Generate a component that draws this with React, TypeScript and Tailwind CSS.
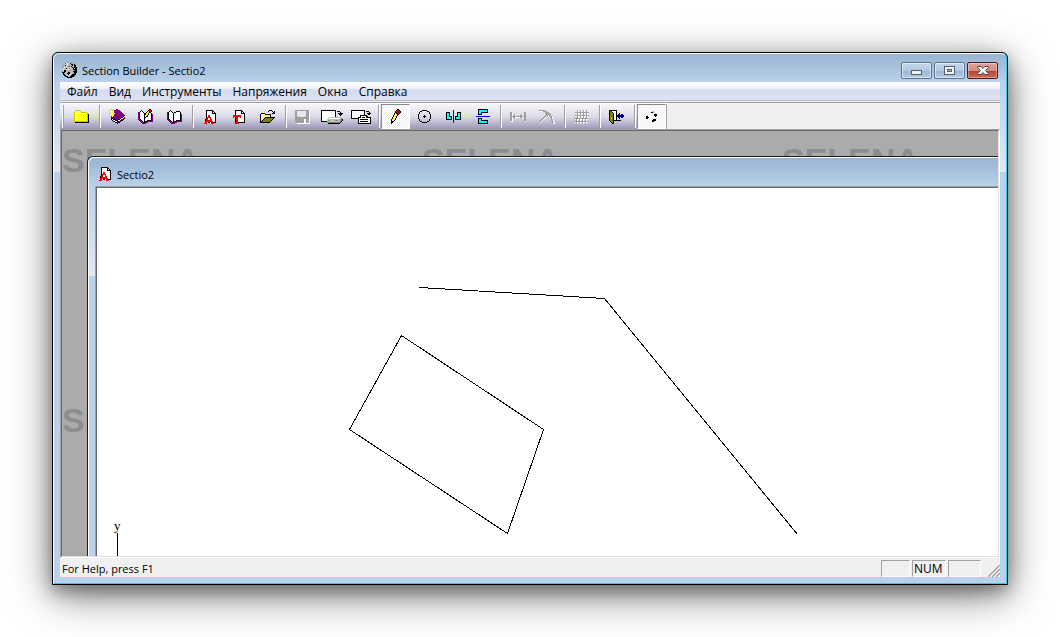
import type { ReactNode } from 'react';

const palette: Record<string, string> = {
  K: '#000000',
  W: '#ffffff',
  R: '#ff0000',
  D: '#a00000',
  Y: '#ffff00',
  L: '#ffffa0',
  O: '#808000',
  A: '#c8c800',
  P: '#800080',
  G: '#808080',
  S: '#c0c0c0',
  C: '#00ffff',
  B: '#0000ff',
  N: '#000080',
  E: '#00e000',
  M: '#a0a0a0',
  U: '#e8e8e8',
};

interface PixelsProps {
  rows: string[];
  className?: string;
}

// Small bitmap icon: one letter per pixel, "." is transparent
function Pixels({ rows, className }: PixelsProps) {
  const width = Math.max(...rows.map((row) => row.length));
  return (
    <svg
      width={width}
      height={rows.length}
      viewBox={`0 0 ${width} ${rows.length}`}
      shapeRendering="crispEdges"
      className={className}
      aria-hidden="true"
    >
      {rows.flatMap((row, y) =>
        row.split('').map((c, x) =>
          palette[c] ? <rect key={`${x}-${y}`} x={x} y={y} width={1} height={1} fill={palette[c]} /> : null
        )
      )}
    </svg>
  );
}

const moon = [
  '.....GSSSG......',
  '...GSWSSKSSG....',
  '..SSSWSSSKKSK...',
  '.GSKSSSGSSKSKK..',
  '.SSSWSGGSKSSKK..',
  'GSWSSSSSSSKGKKK.',
  'SSSSKSSGSSSKSKK.',
  'SWSSSSWSSSSKKKK.',
  'SSKKSSSSGSSSGKK.',
  'GSKKSSGSSSSKKKK.',
  'KKKSSSKKSSSSKKK.',
  '.KSSSKKKSSSGKK..',
  '.KKSSSKSSSKKKK..',
  '..KKSSSSSKKKK...',
  '...KKKSSKKKK....',
  '.....KKKKK......',
];

const docA = [
  '..KKKKKKK...',
  '..KWWWWWKK..',
  '..KWWWWWKWK.',
  '..KWWWWWKKKK',
  '..KWWWWWWWWK',
  '..KWRRWWWWWK',
  '..KWRRWWWWWK',
  '..KRRRRWWWWK',
  '..KRWWRWWWWK',
  '.KRRWWRRWWWK',
  '.KRRRRRRWWWK',
  '.RRRRRRRRWWK',
  '.RRWKKWRRKKK',
  'RRR....RRR..',
];

const docT = [
  '..KKKKKKK...',
  '..KWWWWWKK..',
  '..KWWWWWKWK.',
  '..KWWWWWKKKK',
  '..KWWWWWWWWK',
  'RRRRRRRRWWWK',
  'RRRRRRRRWWWK',
  'R.KRRWWRWWWK',
  '..KRRWWWWWWK',
  '..KRRWWWWWWK',
  '..KRRWWWWWWK',
  '..KRRWWWWWWK',
  '..KRRKKKKKKK',
  '..RRRR......',
];

const folder = [
  '..AAAA.........',
  '.AWYWYA........',
  'AWYWYWYAAAAAA..',
  'AWWWWWWWWWWWWG.',
  'AWYLYLYLYLYLYAK',
  'AWLYLYLYLYLYLAK',
  'AWYLYLYLYLYLYAK',
  'AWLYLYLYLYLYLAK',
  'AWYLYLYLYLYLYAK',
  'AWLYLYLYLYLYLAK',
  'AWYLYLYLYLYLYAK',
  'AAAAAAAAAAAAAAK',
  '.KKKKKKKKKKKKKK',
];

const newBook = [
  '..A.A..PP.......',
  'A..A.PPPPPP.....',
  '.YWYWPPPPPPP....',
  '..YYYPPPPPPPP...',
  'AYYWYYPPPPPPPP..',
  '..YYYPPPPPPPPPP.',
  '.YWYWPPPPPPPPPPK',
  'A.PYPPPPPPPPPPKW',
  '..PPPPPPPPPPKKWP',
  '..KKPPPPPPPKWWPK',
  '..KWKKPPPKKWPPK.',
  '...KWWKPKWWPKK..',
  '....KKWWKPPK....',
  '......KKPKK.....',
  '........K.......',
];

const editBook = [
  '...........KK..',
  '...K......KRRK.',
  '..KWK....KYKRK.',
  'PKWWWK..KYYKK..',
  'PKWWWWKKYYKWWK.',
  'PKWWWWKKYYKWWKP',
  'PKWWWWKYYKWWWKP',
  'PKWWWWKYKKWWWKP',
  'PKWWWWKKWWWWWKP',
  'PKWWWWKWWWWWWKP',
  'PPKWWWKWWWWWWKP',
  '.PPKWWKWWKKKKKP',
  '..PPKWKKKPPPPPP',
  '...PPKKPPP.....',
  '....PPPP.......',
];

const openBook = [
  '...K...........',
  '..KWK....KKKK..',
  'PKWWWK.KKWWWWK.',
  'PKWWWWKWWWWWWK.',
  'PKWWWWKWWWWWWKP',
  'PKWWWWKWWWWWWKP',
  'PKWWWWKWWWWWWKP',
  'PKWWWWKWWWWWWKP',
  'PKWWWWKWWWWWWKP',
  'PPKWWWKWWWWWWKP',
  '.PPKWWKWWKKKKKP',
  '..PPKWKKKPPPPPP',
  '...PPKKPPP.....',
  '....PPPP.......',
];

const openFolder = [
  '.........KKK...',
  '........K...K.K',
  '.............KK',
  '.KKKK.......KKK',
  'KYLYLKKKKKK....',
  'KLYLYLYLYLK....',
  'KYLYLYLYLYK....',
  'KLYLYKKKKKKKKKK',
  'KYLYKOOOOOOOOK.',
  'KLYKOOOOOOOOK..',
  'KYKOOOOOOOOK...',
  'KKOOOOOOOOK....',
  'KKKKKKKKKK.....',
];

const save = [
  'MMMMMMMMMMMMMM.',
  'MMUUUUUUUUUMMMW',
  'MMUUUUUUUUUMMMW',
  'MMUUUUUUUUUMMMW',
  'MMUUUUUUUUUMMMW',
  'MMUUUUUUUUUMMMW',
  'MMMUUUUUUUMMMMW',
  'MMMMMMMMMMMMMMW',
  'MMMMMMMMMMMMMMW',
  'MMMMMMMMMWWMMMW',
  'MMMMMMMMMWWMMMW',
  'MMMMMMMMMWWMMMW',
  '.MMMMMMMMWWMMMW',
  '..WWWWWWWWWWWWW',
];

const toDisk = [
  'KKKKKKKKKKKKKKK.......',
  'KWWWWWWWWWWWWWK.KKK...',
  'KWWWWWWWWWWWWWK....K..',
  'KWWWWWWWWWWWWWK..KKKKK',
  'KWWWWWWWWWWWWWK...KKK.',
  'KWWWWWWWWWWWWWK....K..',
  'KWWWWWWWWWWWWWK.......',
  'KWWWWWWWSSSSSSSSSSSS..',
  'KWWWWWWSWWWWWWWWWWWSG.',
  'KWWWWWSSSSSSSSSSSSSGGK',
  'KWWWWWSEESSSSSGGGSSGGK',
  'KKKKKKSSSSSSSSSSSSSGK.',
  '......GGGGGGGGGGGGGK..',
  '.......KKKKKKKKKKKK...',
];

const toPrinter = [
  'KKKKKKKKKKKKKK......',
  'KWWWWWWWWWWWWK.KKK..',
  'KWWWWWWWWWWWWK....K.',
  'KWWWWWWWWWWWWK..KKKK',
  'KWWWWWWWWWWWWK...KK.',
  'KWWWWWWWWKKKKKKK....',
  'KWWWWWWWWKWWWWWKK...',
  'KWWWWWWKKKWKKKWKKKKK',
  'KKKKKKKKWWWWWWWWWWWK',
  '.......KWKKKKKKKKWWK',
  '.......KWWWWWWWWWWWK',
  '.......KWKKKKKKKKWWK',
  '.......KWWWWWWWWWWWK',
  '.......KKKKKKKKKKKKK',
];

const pencil = [
  '.......KK..',
  '......KDDK.',
  '.....KRDDDK',
  '.....KKRDDK',
  '....KYKKRK.',
  '....KYYKK..',
  '...KYLYK...',
  '...KYYK....',
  '..KYLYK....',
  '..KYYK.....',
  '.KYLYK.....',
  '.KLYK......',
  '.KKK.......',
  '.KK........',
  '.K.........',
];

const circle = [
  '....KKKKK....',
  '..KK.....KK..',
  '.K.........K.',
  '.K.........K.',
  'K...........K',
  'K.....K.....K',
  'K....KKK....K',
  'K.....K.....K',
  'K...........K',
  '.K.........K.',
  '.K.........K.',
  '..KK.....KK..',
  '....KKKKK....',
];

const mirrorX = [
  '.......B.......',
  '.......B.......',
  'KKKK...B...KKKK',
  'KCCK...B...KCCK',
  'KCCK...B...KCCK',
  'KCCK...B...KCCK',
  'KCCKKK.B.KKKCCK',
  'KCCCCK.B.KCCCCK',
  'KCCCCK.B.KCCCCK',
  'KKKKKK.B.KKKKKK',
  '.......B.......',
  '.......B.......',
  '.......B.......',
];

const mirrorY = [
  '..KKKKKKKKKK..',
  '..KCCCCCCCCK..',
  '..KCCCCCCCCK..',
  '..KCCKKKKKKK..',
  '..KCCK........',
  '..KKKK........',
  '..............',
  'BBBBBBBBBBBBBB',
  '..............',
  '..KKKK........',
  '..KCCK........',
  '..KCCKKKKKKK..',
  '..KCCCCCCCCK..',
  '..KCCCCCCCCK..',
  '..KKKKKKKKKK..',
];

const dimension = [
  'MM............MM',
  'MMW...........MM',
  'MMW.M......M..MM',
  'MMWMMW....MMW.MM',
  'MMMMMMMMMMMMMMMM',
  'MMWMMWWWWWMMWWMM',
  'MMW.MW.....MW.MM',
  'MMW...........MM',
  'MMW...........MM',
  '.WW............W',
];

const arc = [
  'MMMMMM..........',
  '.WWWMMMM........',
  '......MMMM......',
  '......MMMMM.....',
  '.......MMMMM....',
  '......MMMWMM....',
  '.....MMWMW.MM...',
  '....MMW....MMW..',
  '...MMW......MW..',
  '..MMW.......MMW.',
  '.MMW........MMW.',
  'MMW..........MW.',
  '.W...........MMW',
  '..............WW',
];

const grid = [
  '...M..M..M..M..',
  '...MW.MW.MW.MW.',
  '.MMMMMMMMMMMMMM',
  '..WMWWMWWMWWMWW',
  '...MW.MW.MW.MW.',
  '.MMMMMMMMMMMMMM',
  '..WMWWMWWMWWMWW',
  '..MMW.MW.MW.MW.',
  'MMMMMMMMMMMMMM.',
  '.WMWWMWWMWWMWW.',
  '..MW.MW.MW.MW..',
  'MMMMMMMMMMMMMM.',
  '.WMWWMWWMWWMWW.',
  '..MW.MW.MW.MW..',
];

const door = [
  'KKKKKKKK.......',
  'KOKWWWWK.......',
  'KOOKWWWK.......',
  'KOOOKWWK..N....',
  'KOOOKWWK.NN.NN.',
  'KOOOKWWKNNNNNNN',
  'KOOOKWWKNNNNNNN',
  'KOOOKWWK.NN.NN.',
  'KOYOKWWK..N....',
  'KOOOKWWK.......',
  'KOOOKKKKKKKK...',
  '.KOOK..........',
  '..KOK..........',
  '...KK..........',
];

const dots = [
  '......SS...',
  '.....KKS...',
  '.........S.',
  '........KKK',
  '.S......KKK',
  'KK.......K.',
  'KKK........',
  'KK.........',
  '.......KKK.',
  '......KKKK.',
  '......KKS..',
];

interface Tool {
  label: string;
  rows: string[];
  pressed?: boolean;
  disabled?: boolean;
}

const toolGroups: Tool[][] = [
  [{ label: 'Открыть проект', rows: folder }],
  [
    { label: 'Новая книга', rows: newBook },
    { label: 'Редактировать книгу', rows: editBook },
    { label: 'Открыть книгу', rows: openBook },
  ],
  [
    { label: 'Новое сечение', rows: docA },
    { label: 'Новое тонкостенное сечение', rows: docT },
    { label: 'Открыть', rows: openFolder },
  ],
  [
    { label: 'Сохранить', rows: save, disabled: true },
    { label: 'Экспорт', rows: toDisk },
    { label: 'Печать', rows: toPrinter },
  ],
  [
    { label: 'Карандаш', rows: pencil, pressed: true },
    { label: 'Окружность', rows: circle },
    { label: 'Отражение по горизонтали', rows: mirrorX },
    { label: 'Отражение по вертикали', rows: mirrorY },
  ],
  [
    { label: 'Размер', rows: dimension, disabled: true },
    { label: 'Дуга', rows: arc, disabled: true },
  ],
  [{ label: 'Сетка', rows: grid, disabled: true }],
  [{ label: 'Выход', rows: door }],
  [{ label: 'Точки', rows: dots, pressed: true }],
];

const menuItems = ['Файл', 'Вид', 'Инструменты', 'Напряжения', 'Окна', 'Справка'];

function ToolButton({ label, rows, pressed, disabled }: Tool) {
  return (
    <button
      type="button"
      aria-label={label}
      aria-pressed={pressed}
      disabled={disabled}
      className={
        pressed
          ? 'flex w-[29px] items-center justify-center border border-t-[#8a8a8a] border-l-[#8a8a8a] border-r-white border-b-white bg-[repeating-conic-gradient(#f0f0f0_0_25%,#ffffff_0_50%)] bg-[length:2px_2px]'
          : 'flex w-[29px] items-center justify-center'
      }
    >
      <Pixels rows={rows} />
    </button>
  );
}

function Separator() {
  return <div className="my-px mr-px ml-[3px] w-[2px] border-l border-[#a0a0a0] bg-white" />;
}

function CaptionButton({ label, red, children }: { label: string; red?: boolean; children: ReactNode }) {
  return (
    <button
      type="button"
      aria-label={label}
      className={
        red
          ? 'flex h-[17px] w-[31px] items-center justify-center rounded-xs border border-[#4d1a20] bg-[linear-gradient(to_bottom,#dfa59b_0%,#d08c80_50%,#b8412c_50%,#cc6a55_100%)] inset-ring inset-ring-white/35'
          : 'flex h-[17px] w-[31px] items-center justify-center rounded-xs border border-[#5c7390] bg-[linear-gradient(to_bottom,#c5d6e8_0%,#b3c9e0_50%,#9ab5d2_50%,#b4cce4_100%)] inset-ring inset-ring-white/50'
      }
    >
      {children}
    </button>
  );
}

function TitleBar() {
  return (
    <header className="flex h-7 items-center gap-1 pr-[2px] pl-[2px]">
      <Pixels rows={moon} className="mt-1" />
      <h1 className="mt-[6px] flex-1 text-[11px] leading-4">Section Builder - Sectio2</h1>
      <div className="mt-1 flex gap-[2px]">
        <CaptionButton label="Свернуть">
          <svg width="11" height="5" className="mt-1" shapeRendering="crispEdges">
            <rect width="11" height="5" fill="#53606f" />
            <rect x="1" y="1" width="9" height="3" fill="#f2f2f2" />
          </svg>
        </CaptionButton>
        <CaptionButton label="Развернуть">
          <svg width="11" height="9" shapeRendering="crispEdges">
            <rect width="11" height="9" fill="#53606f" />
            <rect x="1" y="1" width="9" height="7" fill="#f2f2f2" />
            <rect x="3" y="3" width="5" height="3" fill="#53606f" />
            <rect x="4" y="4" width="3" height="1" fill="#a9bfd8" />
          </svg>
        </CaptionButton>
        <CaptionButton label="Закрыть" red>
          <svg width="12" height="9" viewBox="0 0 12 9">
            <path
              d="M.5.5h3.6L6 2.4 7.900.5h3.600v1L8.600 4.500l2.900 3v1H7.900L6 6.600 4.100 8.500H.5v-1l2.900-3L.5 1.500z"
              fill="#f6f6f6"
              stroke="#4f4650"
            />
          </svg>
        </CaptionButton>
      </div>
    </header>
  );
}

function MenuBar() {
  return (
    <nav className="flex h-[19px] items-center gap-[11px] border-b border-[#b6bccc] bg-[linear-gradient(to_bottom,#ffffff_0%,#eef1f8_35%,#d5dcee_45%,#dfe4f3_100%)] pt-[2px] pl-[7px]">
      {menuItems.map((item) => (
        <button key={item} type="button" className="leading-4">
          {item}
        </button>
      ))}
    </nav>
  );
}

function Toolbar() {
  return (
    <div className="mt-px flex h-[27px] border-t border-[#a0a0a0] bg-[#f0f0f0]">
      <div className="flex border-t border-white bg-linear-to-b from-[#f6f6fa] via-[#dcdce8] to-[#9c97b8] pl-[2px]">
        <div className="my-px mr-[3px] w-[2px] border-l border-white bg-[#a0a0a0]" />
        {toolGroups.map((group, i) => (
          <div key={group[0].label} className="flex">
            {i > 0 && <Separator />}
            {group.map((tool) => (
              <ToolButton key={tool.label} {...tool} />
            ))}
          </div>
        ))}
        <div className="w-px bg-[#a0a0a0]" />
      </div>
    </div>
  );
}

function Watermark() {
  return (
    <div className="absolute inset-0 grid auto-rows-[260px] grid-cols-[repeat(3,360px)] overflow-hidden pt-[11px] font-['Liberation_Sans',sans-serif] text-[34px] leading-9 font-bold text-[#8d8d91]">
      {[0, 1, 2, 3, 4, 5].map((n) => (
        <span key={n}>SELENA</span>
      ))}
    </div>
  );
}

function SectionCanvas() {
  return (
    <svg width="100%" height="100%" className="block" shapeRendering="crispEdges" fill="none" stroke="#000000">
      <polyline points="322.5,99.5 507.500,110.500 700.500,346.500" />
      <polygon points="304.500,147.500 446.500,241.500 410.500,345.500 252.500,241.500" />
      <line x1="20.500" y1="345" x2="20.500" y2="100%" />
      <text x="17" y="342" fill="#000000" stroke="none" className="font-['Liberation_Serif',serif] text-[13px]">
        y
      </text>
    </svg>
  );
}

function ChildWindow() {
  return (
    <section className="relative mt-[25px] ml-[25px] flex flex-1 flex-col rounded-tl-md border-t border-l border-[#1c1c1c] bg-[#b9d1ea]">
      <div className="flex flex-1 flex-col rounded-tl-md border-t border-l border-white bg-[linear-gradient(to_bottom,#99b4d1_0,#b9d1ea_28px,#dfe9f5_118px,#b9d1ea_118px)] pl-[6px]">
        <header className="flex h-7 items-center gap-1 bg-linear-to-b from-[#99b4d1] to-[#b9d1ea] pl-1">
          <Pixels rows={docA} className="mt-1" />
          <h2 className="mt-[6px] ml-[2px] text-[11px] leading-4">Sectio2</h2>
        </header>
        <div className="flex flex-1 border-t border-l border-[#a0a0a0]">
          <div className="flex-1 border-t border-l border-[#696969] bg-white">
            <SectionCanvas />
          </div>
        </div>
      </div>
    </section>
  );
}

function StatusBar() {
  return (
    <footer className="flex h-[19px] items-center bg-[#f0f0f0] pt-px pl-[2px]">
      <span className="flex-1 pt-px text-[11px] leading-4">For Help, press F1</span>
      <div className="flex gap-[2px] pr-[7px]">
        <div className="h-[17px] w-[29px] border border-t-[#a0a0a0] border-r-white border-b-white border-l-[#a0a0a0]" />
        <div className="h-[17px] w-[34px] border border-t-[#a0a0a0] border-r-white border-b-white border-l-[#a0a0a0] pl-px leading-4">
          NUM
        </div>
        <div className="h-[17px] w-[33px] border border-t-[#a0a0a0] border-r-white border-b-white border-l-[#a0a0a0]" />
      </div>
      <svg width="12" height="12" className="self-end" stroke="#a0a0a0" aria-hidden="true">
        <path d="M0 12 12 0M4 12l8-8M8 12l4-4" strokeWidth="1.500" />
        <path d="M2 12 12 2M6 12l6-6M10 12l2-2" stroke="#ffffff" />
      </svg>
    </footer>
  );
}

export default function App() {
  return (
    <main className="flex h-screen bg-white p-[52px] font-['Open_Sans','Noto_Sans',sans-serif] text-[12px] text-black">
      <div className="flex min-w-0 flex-1 rounded-t-md border border-black bg-[#35c5e8] shadow-[0_6px_16px_rgba(0,0,0,0.3),0_10px_40px_rgba(0,0,0,0.55)]">
        <div className="flex min-w-0 flex-1 flex-col rounded-t-md border border-t-white border-r-[#35c5e8] border-b-[#35c5e8] border-l-white bg-[linear-gradient(to_bottom,#99b4d1_0,#b9d1ea_28px,#dfe9f5_118px,#b9d1ea_118px)] px-[6px] pb-[6px]">
          <TitleBar />
          <div className="flex min-h-0 flex-1 flex-col bg-[#f0f0f0]">
            <MenuBar />
            <Toolbar />
            <div className="flex min-h-0 flex-1 border border-t-[#a0a0a0] border-r-white border-b-white border-l-[#a0a0a0]">
              <div className="relative flex min-w-0 flex-1 overflow-hidden border border-t-[#696969] border-r-[#e3e3e3] border-b-[#e3e3e3] border-l-[#696969] bg-[#ababab]">
                <Watermark />
                <ChildWindow />
              </div>
            </div>
            <StatusBar />
          </div>
        </div>
      </div>
    </main>
  );
}
